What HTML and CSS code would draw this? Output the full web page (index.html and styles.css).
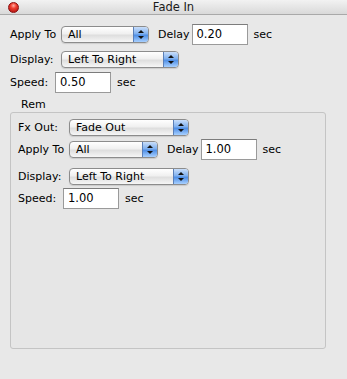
FILE: index.html
```html
<!DOCTYPE html>
<html lang="en">
  <head>
    <meta charset="UTF-8" />
    <title>Fade In</title>
    <link rel="stylesheet" href="styles.css">
  </head>
  <body>
    <div class="window">
      <div class="titlebar">
        <span class="close"></span>
        <span class="title">Fade In</span>
      </div>
      <div class="content">
        <div class="row r1">
          <span class="label">Apply To</span>
          <div class="popup w88"><span>All</span><i class="arrows"></i></div>
          <span class="label delay">Delay</span>
          <div class="field">0.20</div>
          <span class="unit">sec</span>
        </div>
        <div class="row r2">
          <span class="label">Display:</span>
          <div class="popup w118"><span>Left To Right</span><i class="arrows"></i></div>
        </div>
        <div class="row r3">
          <span class="label short">Speed:</span>
          <div class="field">0.50</div>
          <span class="unit">sec</span>
        </div>

        <div class="group-title">Rem</div>
        <div class="group">
          <div class="row g1">
            <span class="label">Fx Out:</span>
            <div class="popup w120"><span>Fade Out</span><i class="arrows"></i></div>
          </div>
          <div class="row g2">
            <span class="label">Apply To</span>
            <div class="popup w89"><span>All</span><i class="arrows"></i></div>
            <span class="label delay">Delay</span>
            <div class="field">1.00</div>
            <span class="unit">sec</span>
          </div>
          <div class="row g3">
            <span class="label">Display:</span>
            <div class="popup w120"><span>Left To Right</span><i class="arrows"></i></div>
          </div>
          <div class="row g4">
            <span class="label short">Speed:</span>
            <div class="field">1.00</div>
            <span class="unit">sec</span>
          </div>
        </div>
      </div>
    </div>
  </body>
</html>
```

FILE: styles.css
```css
body {
  margin: 0;
  font-family: "DejaVu Sans", sans-serif;
  font-size: 11px;
  color: #000;
  background: #e8e8e8;
}
.window {
  width: 347px;
  height: 379px;
  background: #e8e8e8;
  overflow: hidden;
}
.titlebar {
  position: relative;
  height: 14px;
  border-bottom: 1px solid #a9a9a9;
  background: linear-gradient(to bottom, #f2f2f2, #d9d9d9);
  display: flex;
  justify-content: center;
  align-items: center;
}
.title {
  font-size: 11.5px;
  line-height: 14px;
  color: #1a1a1a;
}
.close {
  position: absolute;
  left: 8px;
  top: 2px;
  width: 9px;
  height: 9px;
  border-radius: 50%;
  border: 0.5px solid #8a1010;
  background: radial-gradient(circle at 50% 30%, #ffb0a8 0, #f04030 35%, #b01010 90%);
}
.content {
  padding: 8px 0 0 10px;
}
.row {
  display: flex;
  align-items: center;
  height: 22px;
}
.r2 { margin-top: 3px; }
.r3 { margin-top: 1px; }
.label {
  width: 51px;
  flex: none;
  white-space: nowrap;
}
.label.short { width: 45px; }
.label.delay {
  width: auto;
  margin-left: 9px;
  margin-right: 2px;
}
.popup {
  position: relative;
  height: 15px;
  border: 1px solid #8c8c8c;
  border-radius: 4px;
  background: linear-gradient(to bottom, #ffffff, #f0f0f0 45%, #dedede 55%, #f6f6f6);
  display: flex;
  align-items: center;
  box-shadow: 0 1px 1px rgba(0, 0, 0, 0.12);
}
.popup span {
  padding-left: 6px;
  flex: 1;
  line-height: 15px;
}
.w88 { width: 86px; }
.w89 { width: 87px; }
.w118 { width: 116px; }
.w120 { width: 118px; }
.arrows {
  position: relative;
  width: 14px;
  height: 15px;
  border-left: 1px solid #5a7fb8;
  border-radius: 0 3px 3px 0;
  background: linear-gradient(to bottom, #c9defa, #7fb0ef 45%, #4f8fe6 55%, #a8d0ff);
}
.arrows::before,
.arrows::after {
  content: "";
  position: absolute;
  left: 4px;
  border-left: 3px solid transparent;
  border-right: 3px solid transparent;
}
.arrows::before {
  top: 3px;
  border-bottom: 3px solid #111;
}
.arrows::after {
  top: 9px;
  border-top: 3px solid #111;
}
.field {
  height: 19px;
  width: 50px;
  border: 1px solid #9a9a9a;
  border-top-color: #7c7c7c;
  background: #fff;
  padding-left: 4px;
  line-height: 19px;
  font-size: 11.5px;
}
.unit {
  margin-left: 6px;
}
.group-title {
  margin: 5px 0 0 11px;
  line-height: 14px;
}
.group {
  width: 307px;
  height: 227px;
  border: 1px solid #c4c4c4;
  border-radius: 3px;
  padding: 3px 0 5px 7px;
  background: #e6e6e6;
}
.g3 { margin-top: 5px; }
```
